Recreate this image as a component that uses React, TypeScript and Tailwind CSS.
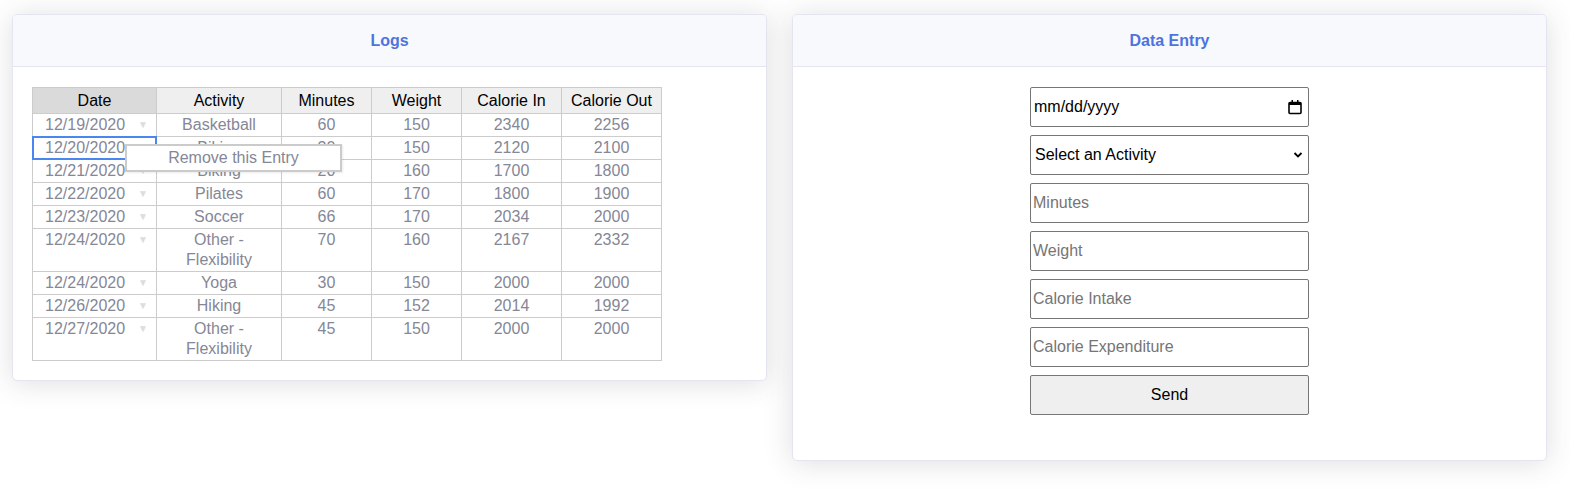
import React from "react";

const rows: { date: string; activity: string[]; min: string; w: string; cin: string; cout: string }[] = [
  { date: "12/19/2020", activity: ["Basketball"], min: "60", w: "150", cin: "2340", cout: "2256" },
  { date: "12/20/2020", activity: ["Biking"], min: "30", w: "150", cin: "2120", cout: "2100" },
  { date: "12/21/2020", activity: ["Biking"], min: "20", w: "160", cin: "1700", cout: "1800" },
  { date: "12/22/2020", activity: ["Pilates"], min: "60", w: "170", cin: "1800", cout: "1900" },
  { date: "12/23/2020", activity: ["Soccer"], min: "66", w: "170", cin: "2034", cout: "2000" },
  { date: "12/24/2020", activity: ["Other -", "Flexibility"], min: "70", w: "160", cin: "2167", cout: "2332" },
  { date: "12/24/2020", activity: ["Yoga"], min: "30", w: "150", cin: "2000", cout: "2000" },
  { date: "12/26/2020", activity: ["Hiking"], min: "45", w: "152", cin: "2014", cout: "1992" },
  { date: "12/27/2020", activity: ["Other -", "Flexibility"], min: "45", w: "150", cin: "2000", cout: "2000" },
];

const font = { fontFamily: '"Liberation Sans", Arial, Helvetica, sans-serif' };

function Card({ title, children }: { title: string; children: React.ReactNode }) {
  return (
    <div className="w-[755px] rounded-[5px] border border-[#e3e6f0] bg-white shadow-[0_2px_28px_0_rgba(58,59,69,0.17)] overflow-hidden">
      <div className="h-[52px] border-b border-[#e3e6f0] bg-[#f8f9fc] flex items-center justify-center">
        <span className="text-[16px] font-bold text-[#4e73df]">{title}</span>
      </div>
      {children}
    </div>
  );
}

export default function App() {
  const inputCls =
    "h-[40px] w-full rounded-[2px] border border-[#767676] bg-white px-[2px] text-[16px] text-black placeholder:text-[#757575] outline-none";
  return (
    <div className="min-h-[496px] bg-white text-[16px] leading-[20px]" style={font}>
      <div className="flex items-start gap-[25px] pl-[12px] pt-[14px]">
        <Card title="Logs">
          <div className="pt-[20px] pl-[19px] pb-[19px]">
            <div className="relative w-[630px]">
              <table className="border-collapse text-center">
                <thead>
                  <tr className="h-[26px] text-black">
                    <th className="w-[124px] border border-[#cccccc] bg-[#dadada] font-normal p-0">Date</th>
                    <th className="w-[125px] border border-[#cccccc] bg-[#efefef] font-normal p-0">Activity</th>
                    <th className="w-[90px] border border-[#cccccc] bg-[#efefef] font-normal p-0">Minutes</th>
                    <th className="w-[90px] border border-[#cccccc] bg-[#efefef] font-normal p-0">Weight</th>
                    <th className="w-[100px] border border-[#cccccc] bg-[#efefef] font-normal p-0">Calorie In</th>
                    <th className="w-[100px] border border-[#cccccc] bg-[#efefef] font-normal p-0">Calorie Out</th>
                  </tr>
                </thead>
                <tbody className="text-[#858796]">
                  {rows.map((r, i) => (
                    <tr key={i}>
                      <td className="relative border border-[#cccccc] p-0 py-[1px] align-top">
                        <div className="flex items-start pl-[12px] pr-[8px]">
                          <span>{r.date}</span>
                          <span className="ml-auto text-[10px] text-[#dddddd]">▼</span>
                        </div>
                        {i === 1 && (
                          <div className="absolute inset-[-1px] border-2 border-[#4a86f0] pointer-events-none" />
                        )}
                      </td>
                      <td className="border border-[#cccccc] p-0 py-[1px] align-top">
                        {r.activity.map((a, j) => (
                          <div key={j}>{a}</div>
                        ))}
                      </td>
                      <td className="border border-[#cccccc] p-0 py-[1px] align-top">{r.min}</td>
                      <td className="border border-[#cccccc] p-0 py-[1px] align-top">{r.w}</td>
                      <td className="border border-[#cccccc] p-0 py-[1px] align-top">{r.cin}</td>
                      <td className="border border-[#cccccc] p-0 py-[1px] align-top">{r.cout}</td>
                    </tr>
                  ))}
                </tbody>
              </table>
              <div className="absolute left-[93px] top-[57px] flex h-[28px] w-[217px] items-center justify-center border-2 border-[#cbcbcb] bg-white text-[#858796] shadow-[1px_1px_2px_rgba(0,0,0,0.08)]">
                Remove this Entry
              </div>
            </div>
          </div>
        </Card>
        <Card title="Data Entry">
          <div className="flex justify-center pt-[20px] pb-[45px]">
            <div className="flex w-[279px] flex-col gap-[8px]">
              <div className="flex h-[40px] w-full items-center rounded-[2px] border border-[#767676] bg-white pl-[3px] pr-[5px] text-black">
                <span>mm/dd/yyyy</span>
                <svg className="ml-auto" width="16" height="16" viewBox="0 0 16 16">
                  <rect x="2" y="3.5" width="12" height="11" rx="1" fill="none" stroke="#000" strokeWidth="1.6" />
                  <rect x="2" y="3" width="12" height="3" fill="#000" />
                  <rect x="4.5" y="1" width="1.5" height="3" fill="#000" />
                  <rect x="10" y="1" width="1.5" height="3" fill="#000" />
                </svg>
              </div>
              <div className="relative">
                <select
                  className="h-[40px] w-full appearance-none rounded-[2px] border border-[#767676] bg-white pl-[4px] text-[16px] text-black outline-none"
                  style={font}
                  defaultValue=""
                >
                  <option value="">Select an Activity</option>
                </select>
                <svg className="pointer-events-none absolute right-[6px] top-[16px]" width="10" height="8" viewBox="0 0 10 8">
                  <path d="M1.5 2 L5 5.5 L8.5 2" fill="none" stroke="#000" strokeWidth="1.8" />
                </svg>
              </div>
              <input className={inputCls} style={font} placeholder="Minutes" />
              <input className={inputCls} style={font} placeholder="Weight" />
              <input className={inputCls} style={font} placeholder="Calorie Intake" />
              <input className={inputCls} style={font} placeholder="Calorie Expenditure" />
              <button
                className="h-[40px] w-full rounded-[2px] border border-[#767676] bg-[#efefef] text-[16px] text-black"
                style={font}
              >
                Send
              </button>
            </div>
          </div>
        </Card>
      </div>
    </div>
  );
}
